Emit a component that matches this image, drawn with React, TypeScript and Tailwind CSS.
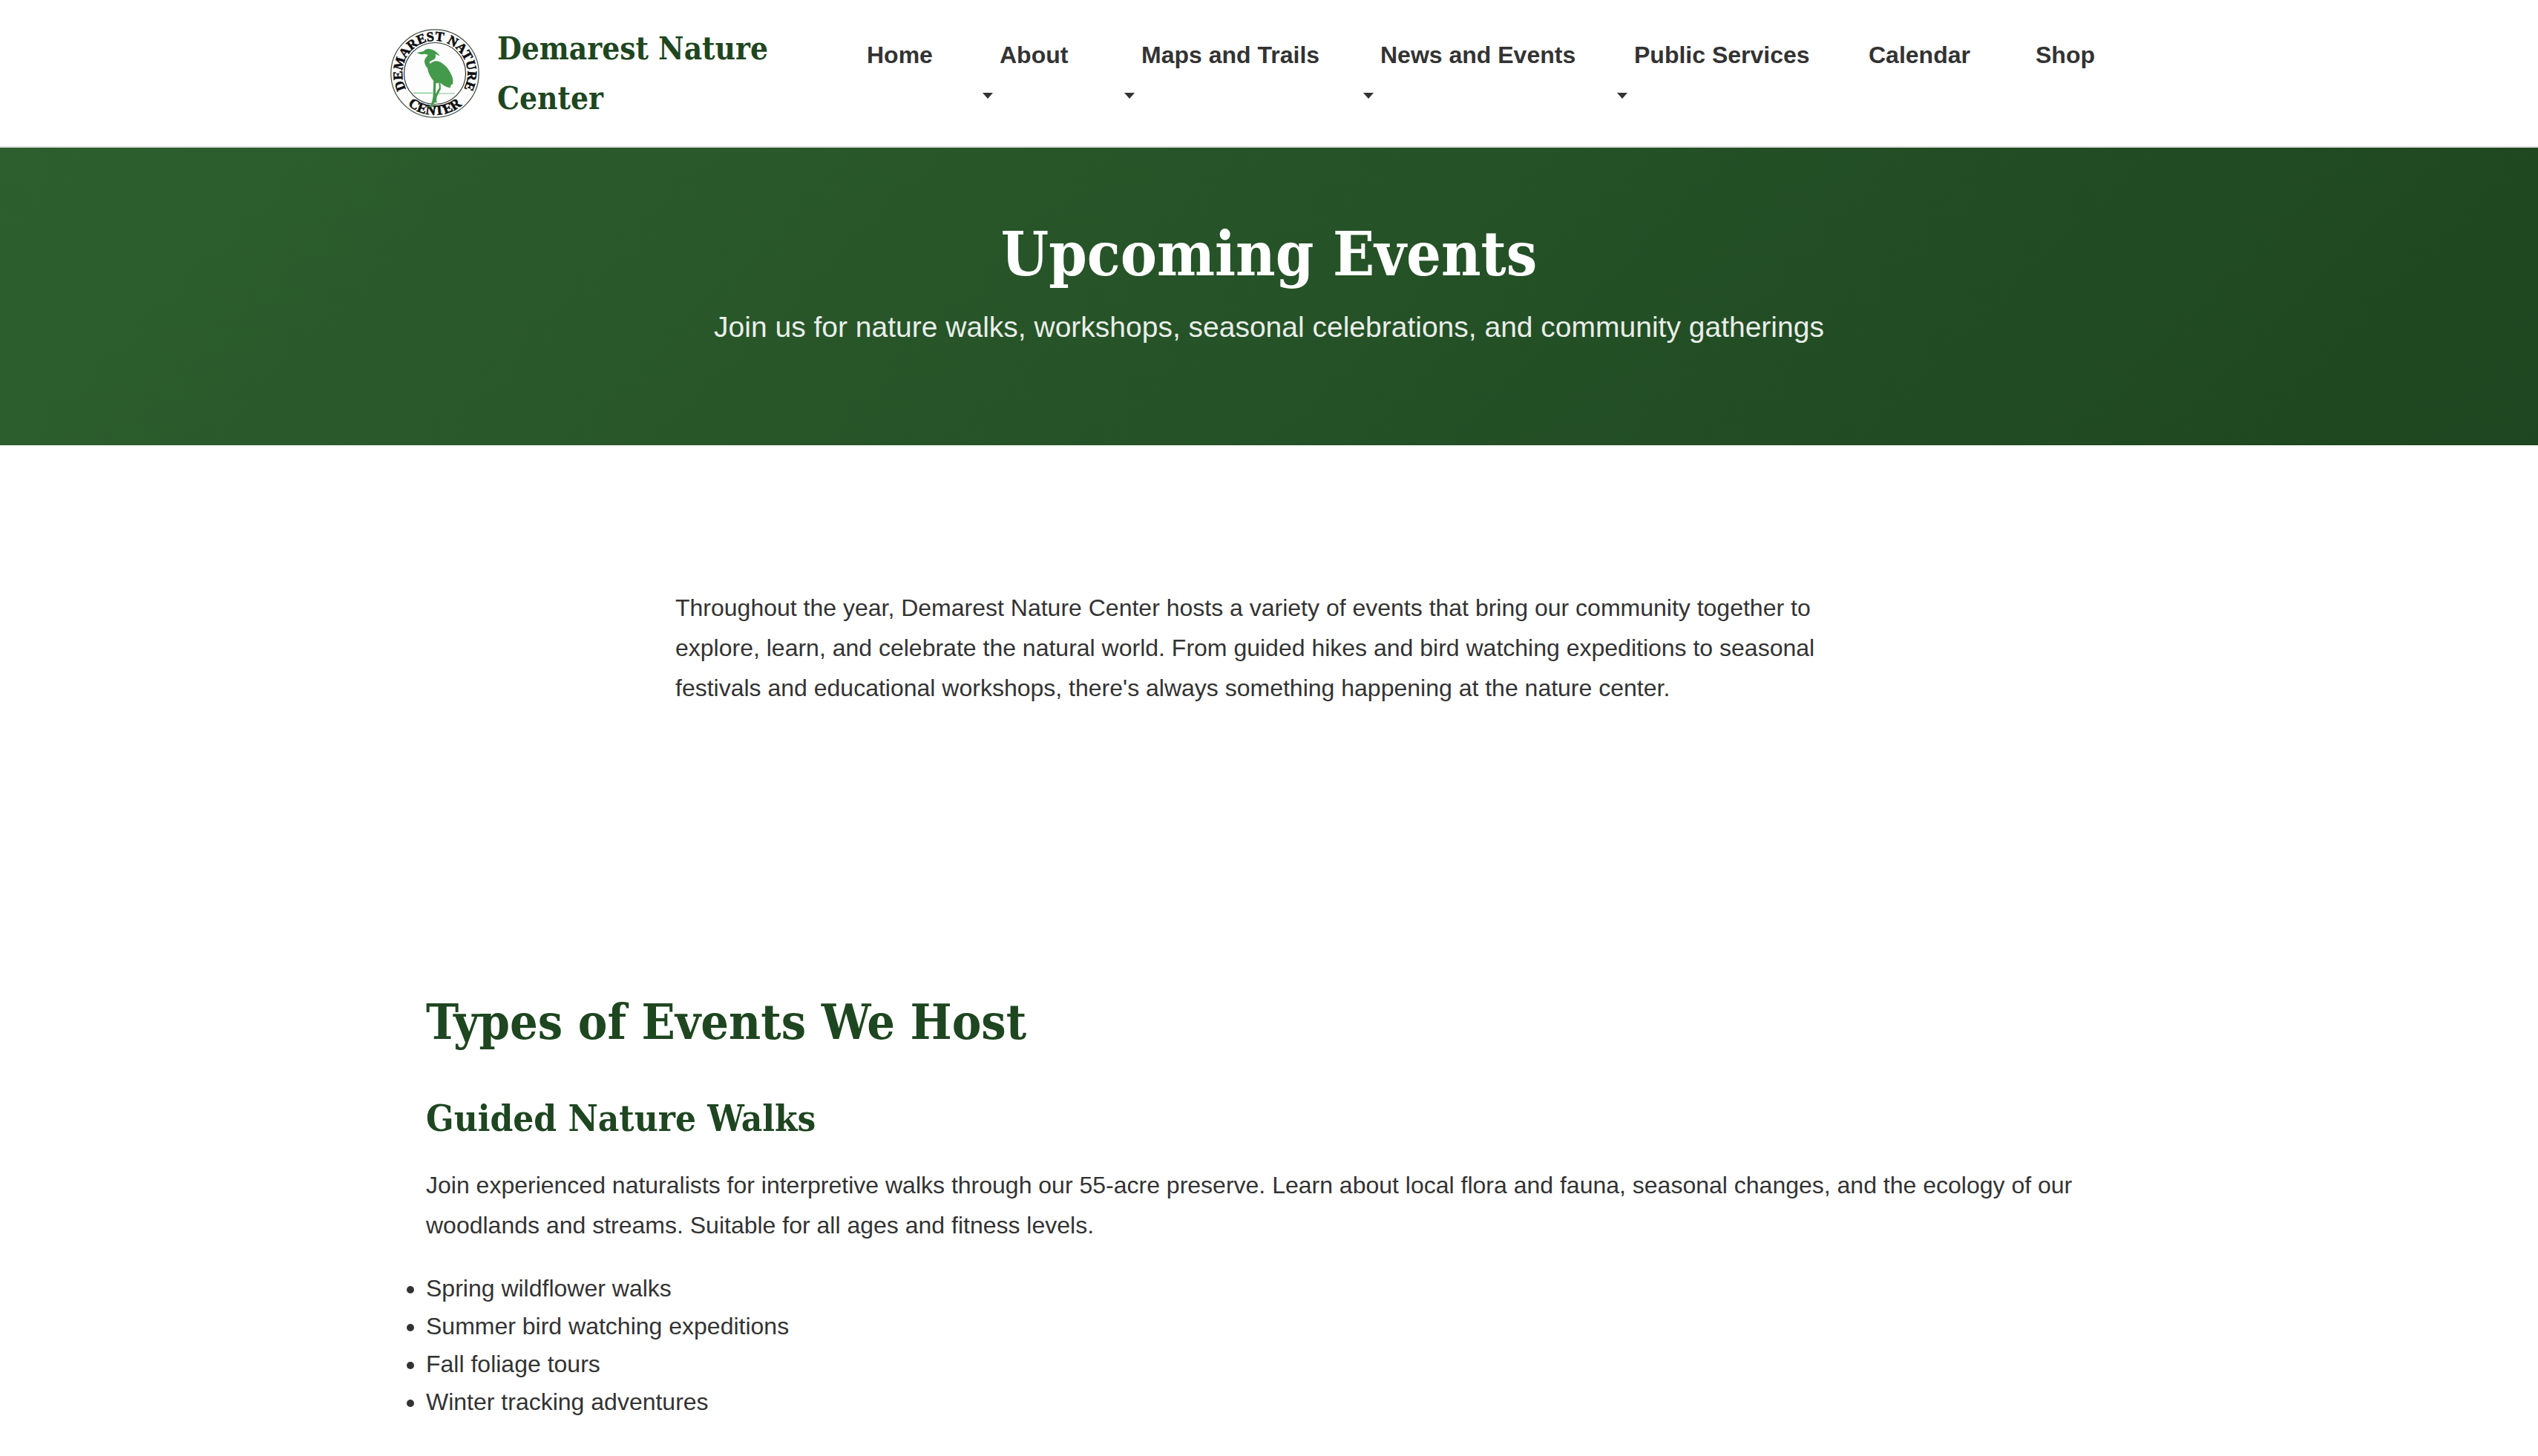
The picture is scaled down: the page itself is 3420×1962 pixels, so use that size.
const navItems = [
  { label: "Home", menu: false, width: "w-[139px]" },
  { label: "About", menu: true, width: "w-[151px]" },
  { label: "Maps and Trails", menu: true, width: "w-[282px]" },
  { label: "News and Events", menu: true, width: "w-[302px]" },
  { label: "Public Services", menu: true, width: "w-[276px]" },
  { label: "Calendar", menu: false, width: "w-[185px]" },
  { label: "Shop", menu: false, width: "w-[126px]" },
];

const walks = [
  "Spring wildflower walks",
  "Summer bird watching expeditions",
  "Fall foliage tours",
  "Winter tracking adventures",
];

function Logo() {
  return (
    <svg viewBox="0 0 120 120" className="size-[120px] shrink-0" role="img" aria-label="Demarest Nature Center logo">
      <defs>
        <path id="ring-full" d="M60 104 A44 44 0 1 1 60.100 104" />
        <path id="ring-bottom" d="M4 60 A56 56 0 0 0 116 60" />
      </defs>
      <circle cx="60" cy="60" r="59.2" fill="#fdfdfd" stroke="#3c4a3c" strokeWidth="1.2" />
      <circle cx="60" cy="60" r="41.5" fill="none" stroke="#2c352c" strokeWidth="1.2" />
      <g fontFamily="'Liberation Serif', serif" fontWeight="700" fill="#0c0c0c" stroke="#0c0c0c" strokeWidth="0.6">
        <text textAnchor="middle" fontSize="18">
          <textPath href="#ring-full" startOffset="50%">DEMAREST NATURE</textPath>
        </text>
        <text textAnchor="middle" fontSize="19">
          <textPath href="#ring-bottom" startOffset="50%">CENTER</textPath>
        </text>
      </g>
      <path d="M31 86.3H57M64 87H87" stroke="#7fbf86" strokeWidth="1.2" />
      <path
        fill="#449a4b"
        d="M35 32.2 45 30 C47 27.5 50 26.4 53 27 C59 28 63 31.500 67 36.300 L60.500 34 C62 38 60.500 41 56 42.500 C53 43.700 51.500 45.500 54 46.800 C57 43 62 42 67 44.500 C76 49 83 60 84.500 69 L84 72.500 84.800 74 82 75 80.500 79.500 C74 78 70 75 67.500 72.500 L68 81 62.800 91 62 97 63.500 98.800 59 99.500 57 103.500 59 105 50 105.500 54.500 102.500 56.500 96.500 57.500 91 58.200 70 C54 65 51 59 50 53 C47 49 45 45 46.500 41 C47.500 38.500 50 37 50.500 34.800 L46.500 33.800 42 34.200Z"
      />
      <path d="M61.300 73.500 61 87.500 65.700 79.500 65.300 72.500Z" fill="#fdfdfd" />
    </svg>
  );
}

export default function App() {
  return (
    <div className="min-h-screen bg-white font-['Liberation_Sans',Arial,sans-serif] text-[32px] leading-[54px] text-[#333333]">
      <header className="border-b-2 border-[#dddddd] bg-white">
        <div className="mx-auto flex max-w-[2400px] items-start justify-between pt-8 pr-16 pb-[31px] pl-4">
          <a href="#home" className="flex items-center gap-6 font-['DejaVu_Serif_Condensed','Liberation_Serif',serif] text-[42px] leading-[67px] font-bold text-[#1e4620]">
            <Logo />
            <span className="w-[400px]">Demarest Nature Center</span>
          </a>
          <nav aria-label="Main">
            <ul className="flex gap-10">
              {navItems.map((item) => (
                <li key={item.label} className={item.width}>
                  <a href="#nav" className="block pt-[17px] pl-[23px] leading-[51px] font-bold whitespace-nowrap">
                    {item.label}
                  </a>
                  {item.menu && (
                    <button type="button" aria-label={`${item.label} menu`} className="block pt-[25px]">
                      <svg viewBox="0 0 14 8" className="h-2 w-3.5" fill="#333333">
                        <path d="M0 0H14L7 8Z" />
                      </svg>
                    </button>
                  )}
                </li>
              ))}
            </ul>
          </nav>
        </div>
      </header>

      <main>
        <section className="bg-[linear-gradient(135deg,#2d5f2e_0%,#1e4620_100%)] px-16 pt-[95px] pb-[127px] text-center text-white">
          <h1 className="font-['DejaVu_Serif_Condensed','Liberation_Serif',serif] text-[82px] leading-[96px] font-bold">
            Upcoming Events
          </h1>
          <p className="mt-[18px] text-[39px] leading-[65px] opacity-90">
            Join us for nature walks, workshops, seasonal celebrations, and community gatherings
          </p>
        </section>

        <section className="mx-auto mt-[192px] max-w-[1600px]">
          <p>
            Throughout the year, Demarest Nature Center hosts a variety of events that bring our community together to
            explore, learn, and celebrate the natural world. From guided hikes and bird watching expeditions to seasonal
            festivals and educational workshops, there's always something happening at the nature center.
          </p>
        </section>

        <section className="mx-auto mt-[385px] max-w-[2400px] px-16 pb-12">
          <h2 className="font-['DejaVu_Serif_Condensed','Liberation_Serif',serif] text-[66px] leading-[77px] font-bold text-[#1e4620]">
            Types of Events We Host
          </h2>
          <h3 className="mt-[60px] font-['DejaVu_Serif_Condensed','Liberation_Serif',serif] text-[49px] leading-[63px] font-bold text-[#1e4620]">
            Guided Nature Walks
          </h3>
          <p className="mt-[31px]">
            Join experienced naturalists for interpretive walks through our 55-acre preserve. Learn about local flora
            and fauna, seasonal changes, and the ecology of our woodlands and streams. Suitable for all ages and fitness
            levels.
          </p>
          <ul className="mt-[33px] list-disc leading-[51px]">
            {walks.map((walk) => (
              <li key={walk}>{walk}</li>
            ))}
          </ul>
        </section>
      </main>
    </div>
  );
}
